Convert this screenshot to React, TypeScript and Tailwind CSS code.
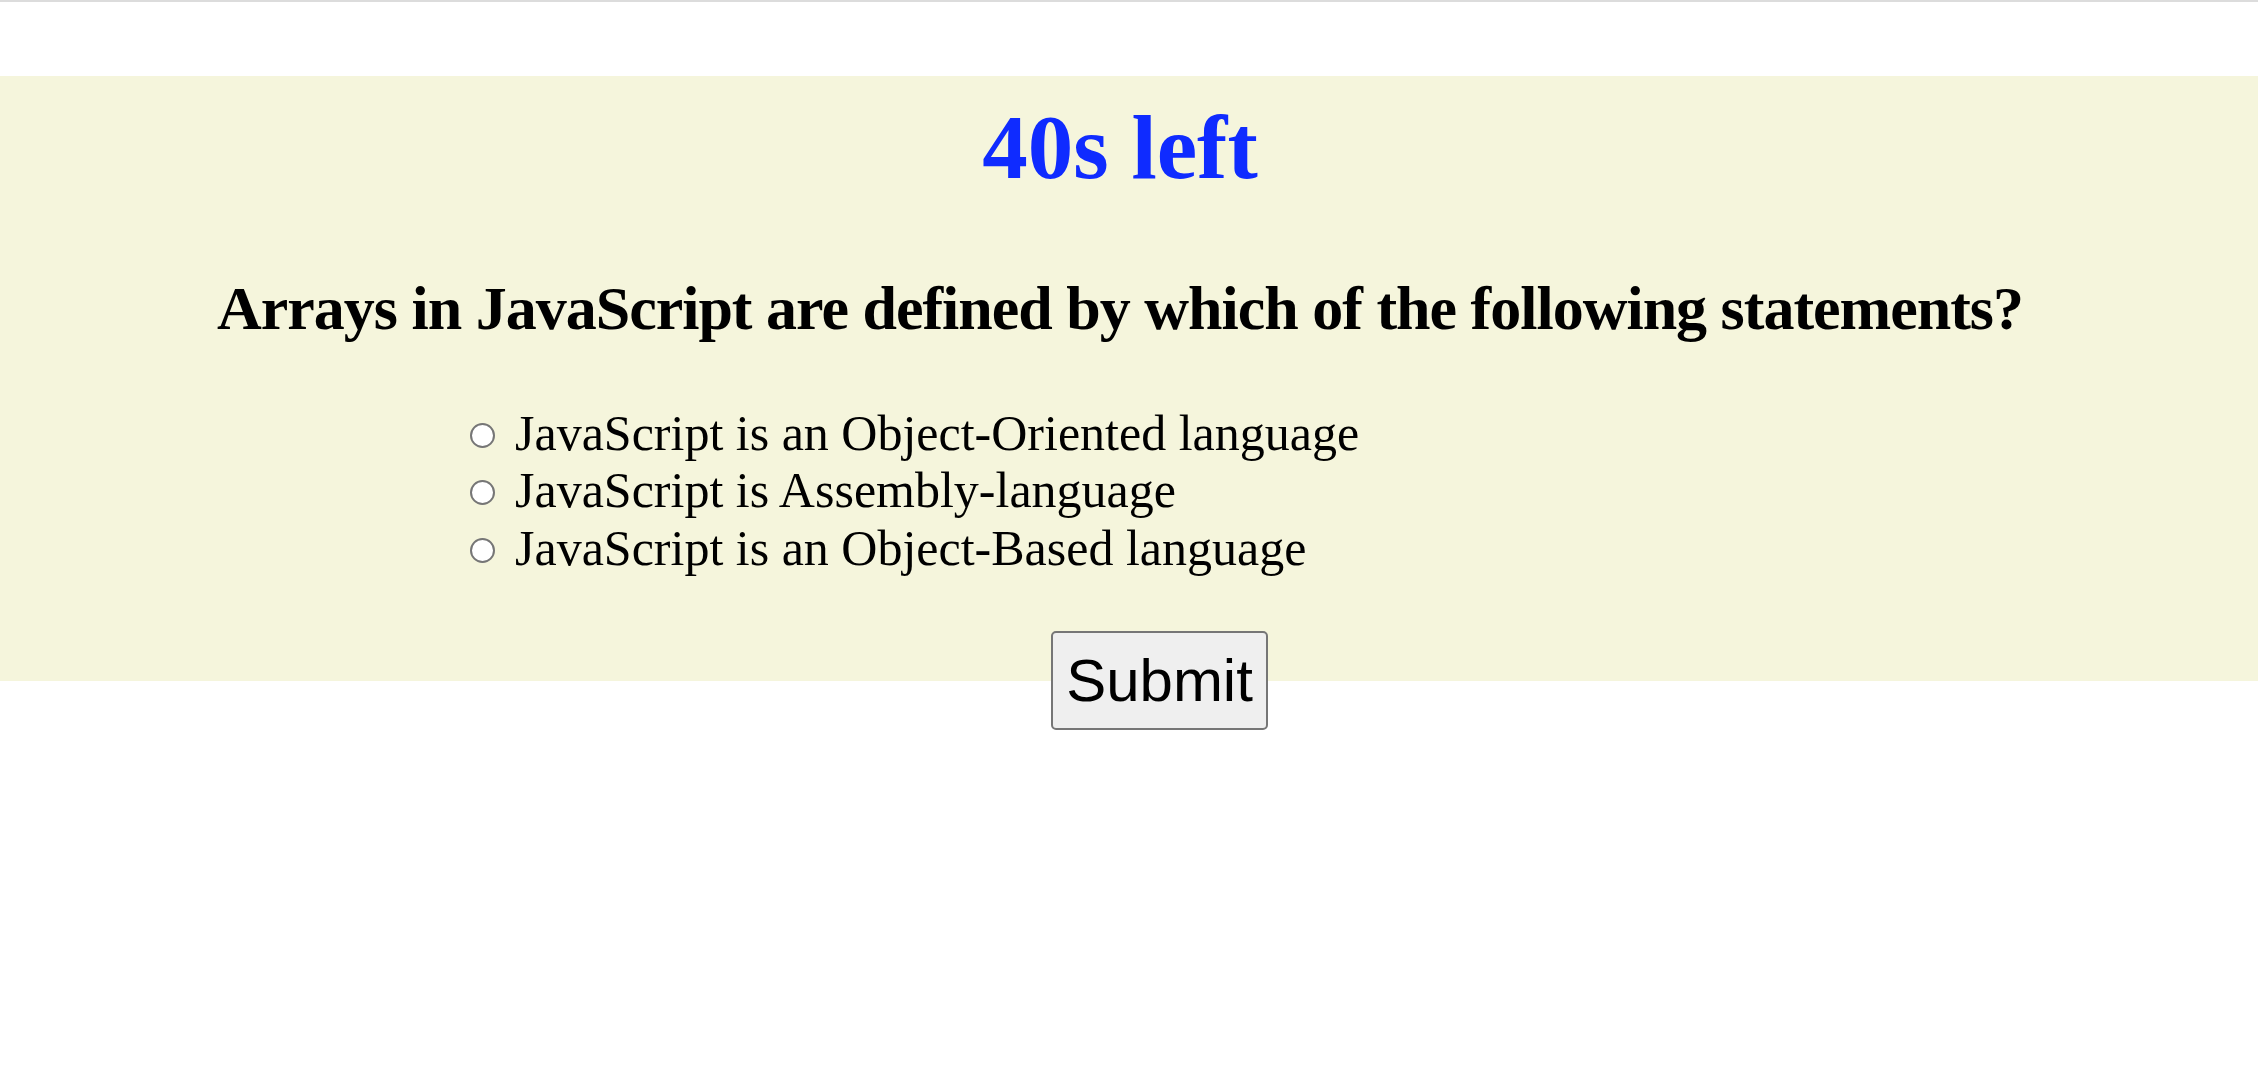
import React from "react";

const options = [
  "JavaScript is an Object-Oriented language",
  "JavaScript is Assembly-language",
  "JavaScript is an Object-Based language",
];

export default function App() {
  return (
    <div className="min-h-screen bg-white">
      <div className="h-[2px] bg-[#dcdcdc]" />
      <div className="mt-[74px] h-[605px] bg-[#f5f5dc] pt-[20px] font-['Liberation_Serif',serif] text-black">
        <div className="pr-[18px] text-center">
          <h1 className="text-[91px] font-bold leading-[1.15] text-[#0f2bff]">40s left</h1>
          <h2 className="mt-[72px] text-[62px] font-bold leading-[1.15] tracking-[-1px]">
            Arrays in JavaScript are defined by which of the following statements?
          </h2>
        </div>
        <div className="mt-[61px] pl-[470px] text-[50px] leading-[1.15]">
          {options.map((o) => (
            <div key={o}>
              <span className="mr-[20px] mb-[2px] inline-block h-[25px] w-[25px] rounded-full border-2 border-[#767676] bg-white align-baseline" />
              {o}
            </div>
          ))}
        </div>
        <div className="mt-[54px] pl-[1051px]">
          <button className="flex h-[99px] w-[217px] items-center justify-center rounded-[5px] border-2 border-[#767676] bg-[#efefef] font-['Liberation_Sans',sans-serif] text-[60px] leading-none text-black">
            Submit
          </button>
        </div>
      </div>
    </div>
  );
}
